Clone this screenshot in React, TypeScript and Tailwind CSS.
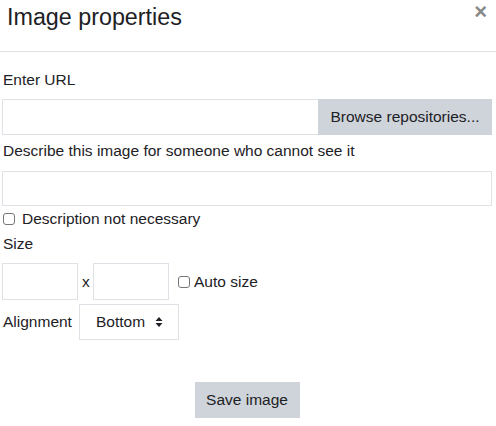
import React from "react";

export default function App() {
  return (
    <div
      className="w-[496px] h-[426px] bg-white text-[#1d2125] text-[15.5px] leading-[22px] overflow-hidden"
      style={{ fontFamily: '"Liberation Sans", Arial, sans-serif' }}
    >
      <div className="h-[52px] border-b border-[#dee2e6] flex justify-between items-start">
        <h5 className="pl-[7px] pt-[4px] text-[23.3px] leading-[27px] font-normal">
          Image properties
        </h5>
        <button className="mr-[9px] mt-[1px] text-[22px] leading-[22px] font-bold text-[#888]">
          ×
        </button>
      </div>

      <div className="pl-[2px] pr-[4px]">
        <label className="block pl-[1px] mt-[17px] h-[22px]">Enter URL</label>
        <div className="flex mt-[8px] h-[36px]">
          <input className="flex-1 min-w-0 border border-[#dee2e6] border-r-0 outline-none" />
          <button className="w-[174px] bg-[#ced4da] text-[#1d2125]">
            Browse repositories...
          </button>
        </div>

        <label className="block pl-[1px] mt-[5px] h-[22px]">
          Describe this image for someone who cannot see it
        </label>
        <textarea className="block w-full mt-[9px] h-[35px] border border-[#dee2e6] resize-none outline-none" />

        <label className="flex items-center mt-[2px] h-[22px]">
          <span className="ml-[1px] w-[12px] h-[12px] border border-[#767676] rounded-[3px]" />
          <span className="ml-[7px]">Description not necessary</span>
        </label>

        <label className="block pl-[1px] mt-[3px] h-[22px]">Size</label>
        <div className="flex items-center mt-[8px] h-[37px]">
          <input className="w-[76px] h-full border border-[#dee2e6] outline-none" />
          <span className="mx-[4px] w-[7px]">x</span>
          <input className="w-[76px] h-full border border-[#dee2e6] outline-none" />
          <span className="ml-[9px] w-[12px] h-[12px] border border-[#767676] rounded-[3px]" />
          <span className="ml-[4px]">Auto size</span>
        </div>

        <div className="flex items-center mt-[4px] h-[36px]">
          <span className="pl-[1px] w-[77px]">Alignment</span>
          <div className="w-[100px] h-full border border-[#dee2e6] flex items-center pl-[16px]">
            <span>Bottom</span>
            <svg width="8" height="12" viewBox="0 0 8 12" className="ml-[10px]">
              <path d="M4 1 L7.5 5 L0.5 5 Z" fill="#1d2125" />
              <path d="M4 11 L7.5 7 L0.5 7 Z" fill="#1d2125" />
            </svg>
          </div>
        </div>

        <div className="flex justify-center mt-[42px]">
          <button className="w-[105px] h-[36px] bg-[#ced4da] text-[#1d2125]">
            Save image
          </button>
        </div>
      </div>
    </div>
  );
}
